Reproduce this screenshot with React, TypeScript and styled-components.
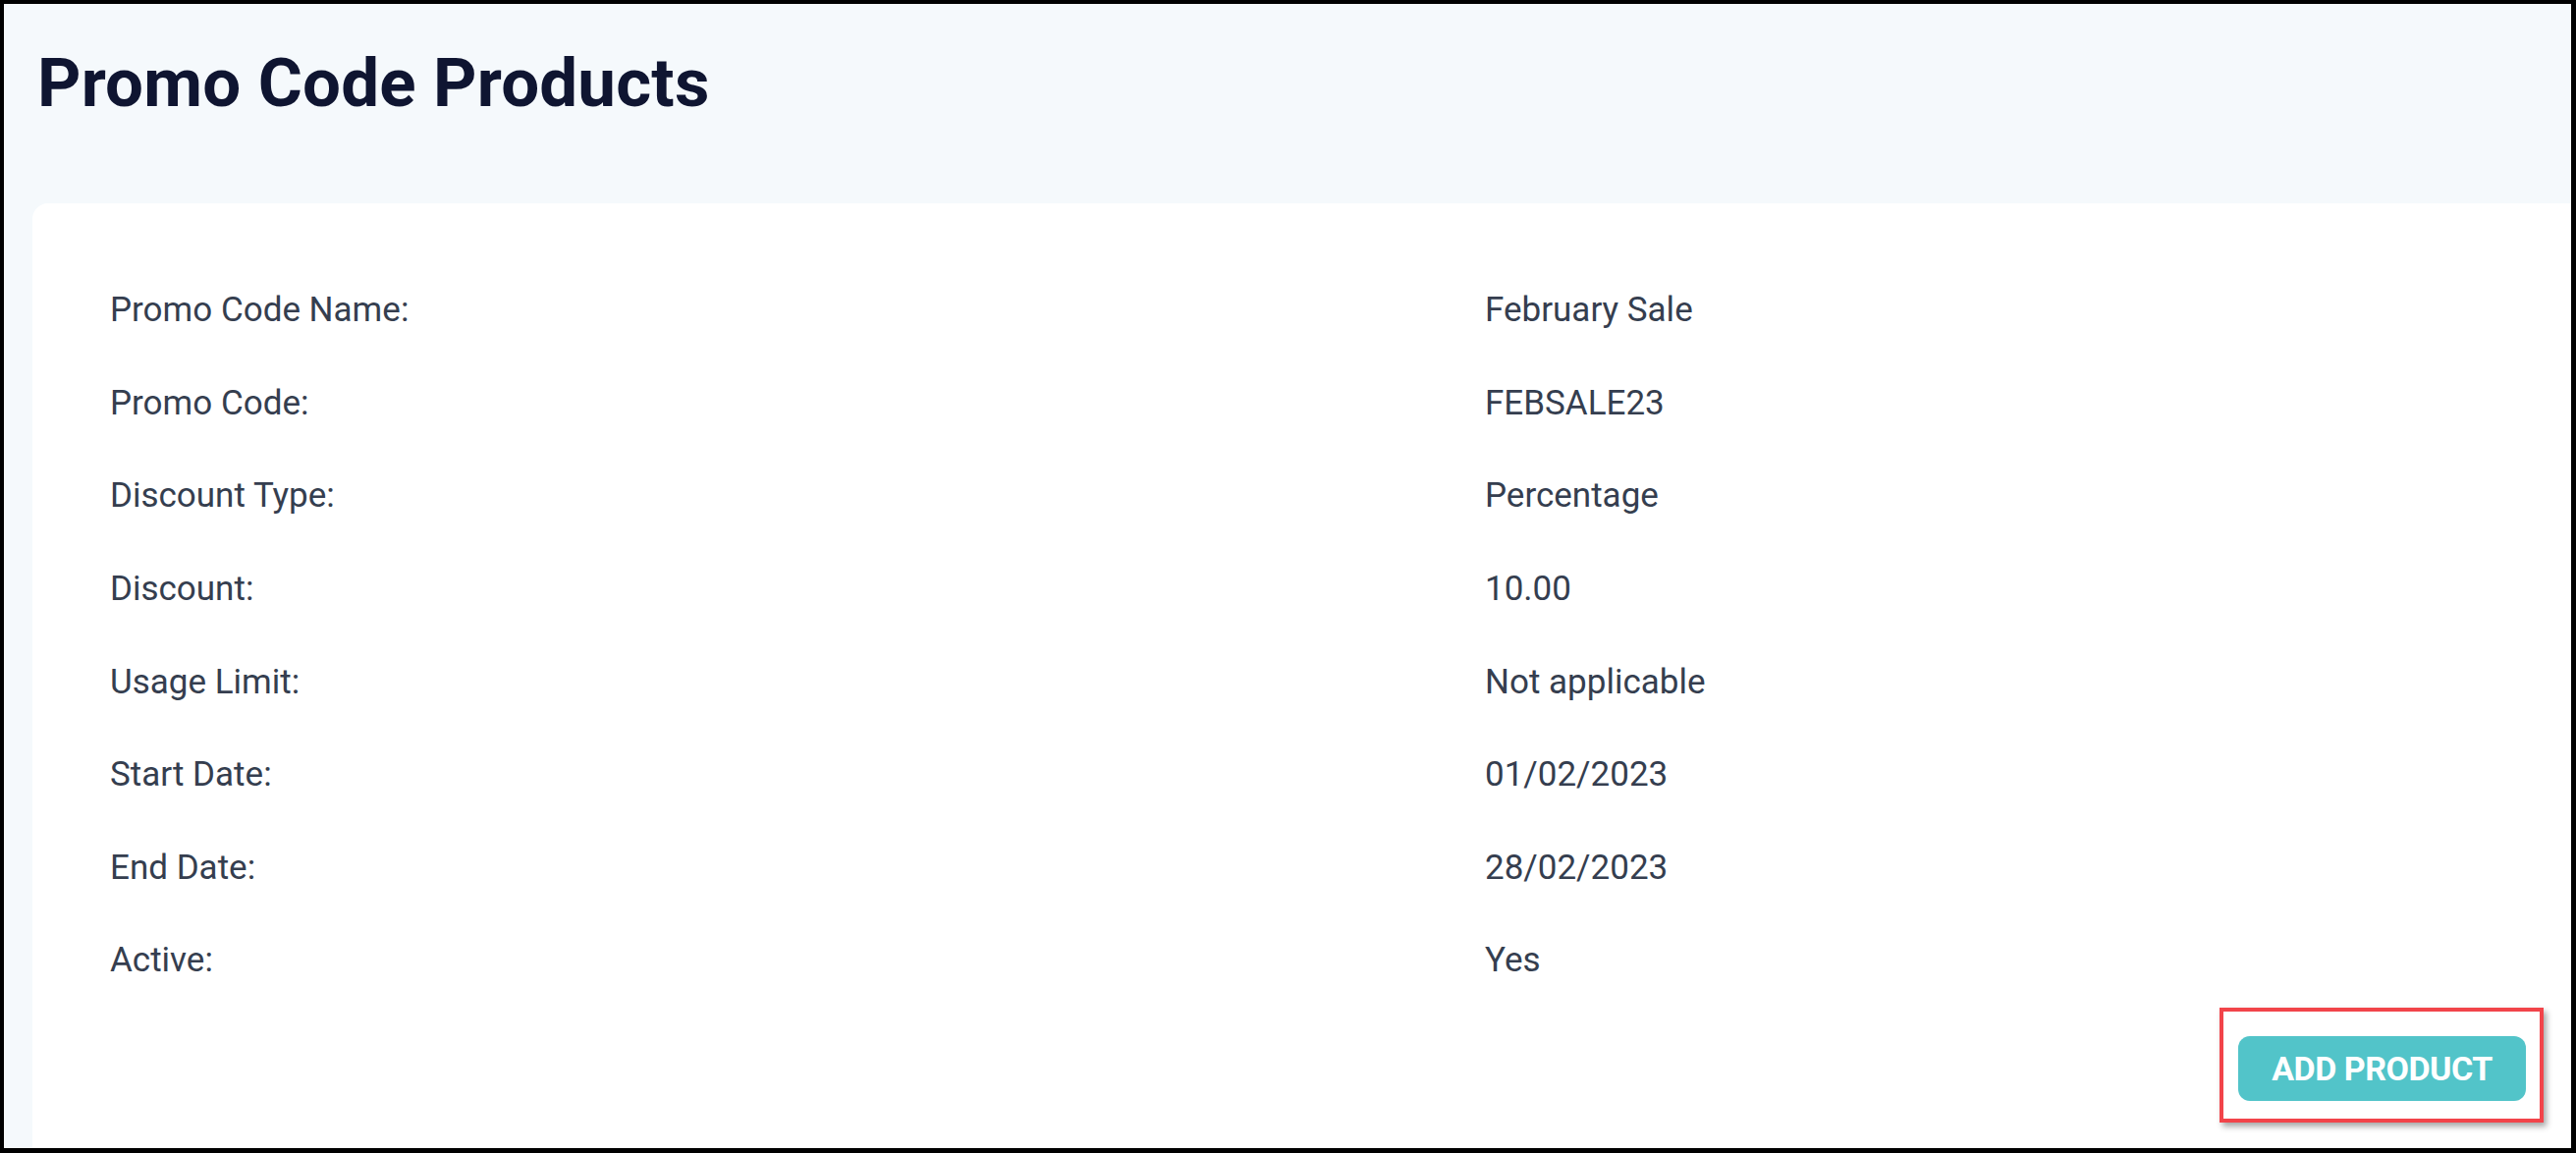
import React from "react";
import styled, { createGlobalStyle } from "styled-components";

const GlobalStyle = createGlobalStyle`
  html, body {
    margin: 0;
    padding: 0;
  }
  body {
    font-family: Roboto, "Liberation Sans", Arial, sans-serif;
  }
  * {
    box-sizing: border-box;
  }
`;

const PROMO_DETAILS = [
  { label: "Promo Code Name:", value: "February Sale" },
  { label: "Promo Code:", value: "FEBSALE23" },
  { label: "Discount Type:", value: "Percentage" },
  { label: "Discount:", value: "10.00" },
  { label: "Usage Limit:", value: "Not applicable" },
  { label: "Start Date:", value: "01/02/2023" },
  { label: "End Date:", value: "28/02/2023" },
  { label: "Active:", value: "Yes" },
];

function App() {
  return (
    <>
      <GlobalStyle />
      <Frame>
        <PageTitle>Promo Code Products</PageTitle>
        <Card>
          <DetailsList>
            {PROMO_DETAILS.map((item) => (
              <DetailRow key={item.label}>
                <DetailLabel>{item.label}</DetailLabel>
                <DetailValue>{item.value}</DetailValue>
              </DetailRow>
            ))}
          </DetailsList>
          <Actions>
            <Highlight>
              <AddButton type="button">ADD PRODUCT</AddButton>
            </Highlight>
          </Actions>
        </Card>
      </Frame>
    </>
  );
}

export default App;

const Frame = styled.div`
  width: 100vw;
  height: 1174px;
  border-style: solid;
  border-color: #000;
  border-width: 4px 5px 5px 4px;
  background: #f5f9fc;
  display: flex;
  flex-direction: column;
  overflow: hidden;
`;

const PageTitle = styled.h1`
  margin: 46px 0 0 34px;
  font-size: 69px;
  line-height: 70px;
  font-weight: 700;
  color: #0f1531;
  letter-spacing: 0.2px;
`;

const Card = styled.div`
  flex: 1;
  margin: 87px 0 0 29px;
  background: #fff;
  border-top-left-radius: 16px;
  padding-top: 62px;
  display: flex;
  flex-direction: column;
`;

const DetailsList = styled.div`
  display: flex;
  flex-direction: column;
  padding-left: 79px;
`;

const DetailRow = styled.div`
  display: grid;
  grid-template-columns: 1400px 1fr;
  align-items: center;
  height: 94.6px;
  font-size: 35px;
  line-height: 1.2;
  color: #353e4f;
`;

const DetailLabel = styled.div``;
const DetailValue = styled.div``;

const Actions = styled.div`
  display: flex;
  justify-content: flex-end;
  padding-right: 28px;
`;

const Highlight = styled.div`
  border: 4px solid #f2444a;
  padding: 25px 14px 18px 15px;
  box-shadow: 3px 4px 6px rgba(0, 0, 0, 0.35);
`;

const AddButton = styled.button`
  width: 293px;
  height: 66px;
  border: none;
  border-radius: 12px;
  background: #52c4c9;
  color: #fff;
  font-family: Roboto, "Liberation Sans", Arial, sans-serif;
  font-size: 34px;
  font-weight: 700;
  letter-spacing: -0.5px;
  cursor: pointer;
  padding: 0;
`;
